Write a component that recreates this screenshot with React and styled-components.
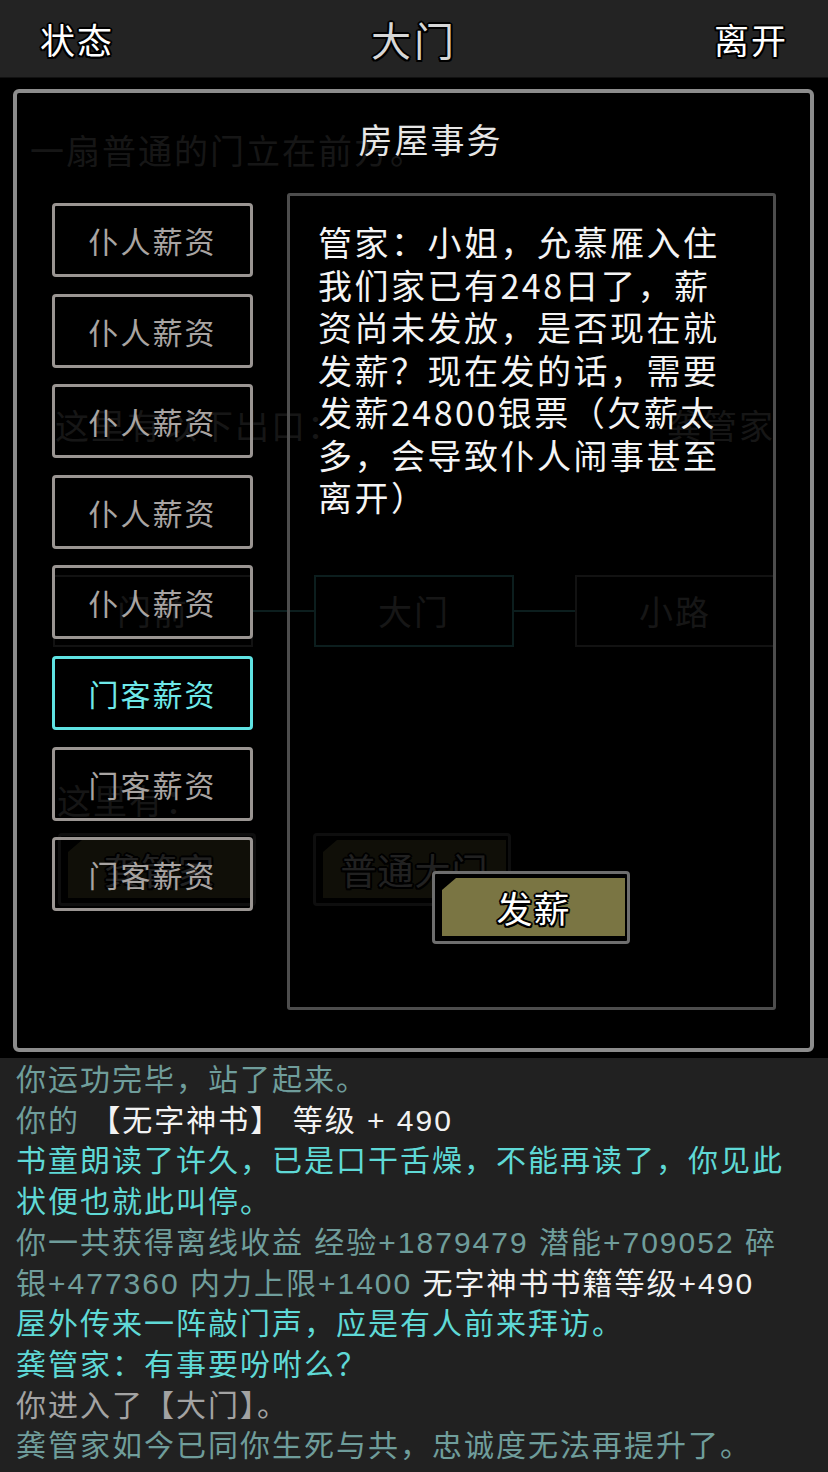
import React from 'react';
import styled, { createGlobalStyle, css } from 'styled-components';

const GlobalStyle = createGlobalStyle`
  html, body {
    margin: 0;
    padding: 0;
    background: #000;
  }
  body {
    font-family: "Noto Sans CJK SC", "Noto Sans", sans-serif;
  }
`;

const outline = css`
  text-shadow: -2px 0 #000, 2px 0 #000, 0 -2px #000, 0 2px #000,
    -1.5px -1.5px #000, 1.5px 1.5px #000, -1.5px 1.5px #000, 1.5px -1.5px #000;
`;

const Screen = styled.div`
  width: 828px;
  height: 1472px;
  display: flex;
  flex-direction: column;
  background: #000;
  overflow: hidden;
`;

const TopBar = styled.header`
  height: 78px;
  flex: none;
  box-sizing: border-box;
  background: #232323;
  border-bottom: 1px solid #111;
  display: grid;
  grid-template-columns: 1fr auto 1fr;
  align-items: center;
  padding: 0 40px;
`;

const TopLink = styled.span`
  font-size: 35px;
  letter-spacing: 2px;
  color: #fff;
  justify-self: ${p => (p.$end ? 'end' : 'start')};
  ${outline}
`;

const TopTitle = styled.h1`
  margin: 0;
  font-size: 40px;
  font-weight: 400;
  letter-spacing: 3px;
  color: #d6d6d6;
  ${outline}
`;

/* the room page that sits behind the dialog */
const Scene = styled.main`
  position: relative;
  flex: 1;
  box-sizing: border-box;
  padding-top: 50px;
  color: #a8a8a8;
  font-size: 34px;
  line-height: 44px;
  letter-spacing: 2px;
`;

const SceneText = styled.p`
  margin: ${p => p.$top || 0}px 0 0;
  padding: 0 53px 0 ${p => p.$left || 30}px;
  display: flex;
  justify-content: space-between;
`;

const MapRow = styled.div`
  margin-top: 128px;
  padding-left: 53px;
  display: flex;
  align-items: center;
`;

const MapNode = styled.div`
  width: 200px;
  height: 72px;
  box-sizing: border-box;
  border: 2px solid ${p => (p.$here ? '#5ee6e6' : '#8a8a8a')};
  display: flex;
  align-items: center;
  justify-content: center;
  font-size: 34px;
`;

const MapLink = styled.span`
  width: 61px;
  height: 2px;
  background: #5ee6e6;
`;

const ItemRow = styled.div`
  margin-top: 11px;
  padding-left: 58px;
  display: flex;
  gap: 57px;
`;

const OliveButton = styled.button`
  width: 198px;
  height: 73px;
  box-sizing: border-box;
  padding: 4px 2px 5px 7px;
  border: 3px solid #6e6e6e;
  border-radius: 4px;
  background: #000;
  font-family: inherit;
  cursor: pointer;
`;

const OliveFace = styled.span`
  display: flex;
  align-items: center;
  justify-content: center;
  width: 100%;
  height: 100%;
  background: #7a7543;
  clip-path: polygon(14px 0, 100% 0, 100% 100%, 0 100%, 0 12px);
  font-size: 36px;
  line-height: 1;
  letter-spacing: 1px;
  color: #fff;
  ${outline}
`;

/* house affairs dialog */
const Dialog = styled.section`
  position: absolute;
  top: 11px;
  left: 13px;
  right: 14px;
  bottom: 6px;
  border: 4px solid #8c8c8c;
  border-radius: 6px;
  background: rgba(0, 0, 0, 0.87);
  display: flex;
  flex-direction: column;
  color: #eee;
`;

const DialogTitle = styled.h2`
  margin: 0;
  padding: 26px 0 0 34px;
  font-size: 34px;
  font-weight: 400;
  line-height: 40px;
  letter-spacing: 2px;
  text-align: center;
  color: #e6e6e6;
`;

const DialogBody = styled.div`
  flex: 1;
  min-height: 0;
  margin-top: 34px;
  display: grid;
  grid-template-columns: 201px 1fr;
  column-gap: 34px;
  padding: 0 34px 38px 35px;
`;

const TabList = styled.nav`
  display: flex;
  flex-direction: column;
  gap: 16.6px;
  padding-top: 10px;
`;

const Tab = styled.button`
  height: 74px;
  box-sizing: border-box;
  border: 3px solid ${p => (p.$active ? '#5fe3e3' : '#9a9592')};
  border-radius: 4px;
  background: transparent;
  font-family: inherit;
  font-size: 30px;
  letter-spacing: 2px;
  color: ${p => (p.$active ? '#6fe9e9' : '#a8a4a2')};
  display: flex;
  align-items: center;
  justify-content: center;
  cursor: pointer;
`;

const Panel = styled.div`
  border: 3px solid #4d4d4d;
  border-radius: 3px;
  display: flex;
  flex-direction: column;
  padding: 25px 40px 0 28px;
`;

const PanelText = styled.p`
  margin: 0;
  font-size: 34px;
  line-height: 42.5px;
  letter-spacing: 2.5px;
  color: #f4f4f4;
`;

const PayButton = styled(OliveButton)`
  margin: auto 0 63px 11px;
  align-self: center;
`;

/* message log */
const Log = styled.section`
  height: 414px;
  flex: none;
  box-sizing: border-box;
  background: #212121;
  padding: 2px 30px 0 16px;
  font-family: "Liberation Sans", "Noto Sans CJK SC", sans-serif;
  font-size: 30px;
  line-height: 40.7px;
  letter-spacing: 2px;
  overflow: hidden;
`;

const tones = {
  muted: '#6f9d9b',
  cyan: '#5fd9d6',
  gray: '#a3a3a3',
};

const LogLine = styled.p`
  margin: 0;
  color: ${p => tones[p.$tone]};
`;

const Bright = styled.span`
  color: #f2f2f2;
`;

const tabs = [
  { label: '仆人薪资' },
  { label: '仆人薪资' },
  { label: '仆人薪资' },
  { label: '仆人薪资' },
  { label: '仆人薪资' },
  { label: '门客薪资', active: true },
  { label: '门客薪资' },
  { label: '门客薪资' },
];

const App = () => (
  <Screen>
    <GlobalStyle />
    <TopBar>
      <TopLink>状态</TopLink>
      <TopTitle>大门</TopTitle>
      <TopLink $end>离开</TopLink>
    </TopBar>

    <Scene>
      <SceneText>一扇普通的门立在前方。</SceneText>
      <SceneText $top={231} $left={55}>
        <span>这里有以下出口：</span>
        <span>龚管家</span>
      </SceneText>
      <MapRow>
        <MapNode>门前</MapNode>
        <MapLink />
        <MapNode $here>大门</MapNode>
        <MapLink />
        <MapNode>小路</MapNode>
      </MapRow>
      <SceneText $top={131} $left={57}>这里有：</SceneText>
      <ItemRow>
        <OliveButton><OliveFace>龚管家</OliveFace></OliveButton>
        <OliveButton><OliveFace>普通大门</OliveFace></OliveButton>
      </ItemRow>

      <Dialog>
        <DialogTitle>房屋事务</DialogTitle>
        <DialogBody>
          <TabList>
            {tabs.map((t, i) => (
              <Tab key={i} $active={t.active}>{t.label}</Tab>
            ))}
          </TabList>
          <Panel>
            <PanelText>
              管家：小姐，允慕雁入住我们家已有248日了，薪资尚未发放，是否现在就发薪？现在发的话，需要发薪24800银票（欠薪太多，会导致仆人闹事甚至离开）
            </PanelText>
            <PayButton><OliveFace>发薪</OliveFace></PayButton>
          </Panel>
        </DialogBody>
      </Dialog>
    </Scene>

    <Log>
      <LogLine $tone="muted">你运功完毕，站了起来。</LogLine>
      <LogLine $tone="muted">你的 <Bright>【无字神书】 等级 + 490</Bright></LogLine>
      <LogLine $tone="cyan">书童朗读了许久，已是口干舌燥，不能再读了，你见此状便也就此叫停。</LogLine>
      <LogLine $tone="muted">
        你一共获得离线收益 经验+1879479 潜能+709052 碎银+477360 内力上限+1400 <Bright>无字神书书籍等级+490</Bright>
      </LogLine>
      <LogLine $tone="cyan">屋外传来一阵敲门声，应是有人前来拜访。</LogLine>
      <LogLine $tone="cyan">龚管家：有事要吩咐么？</LogLine>
      <LogLine $tone="gray">你进入了【大门】。</LogLine>
      <LogLine $tone="muted">龚管家如今已同你生死与共，忠诚度无法再提升了。</LogLine>
    </Log>
  </Screen>
);

export default App;
